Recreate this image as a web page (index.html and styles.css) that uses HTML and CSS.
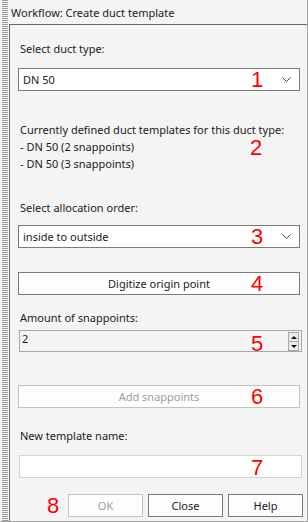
FILE: index.html
```html
<!DOCTYPE html>
<html lang="en">
<head>
  <meta charset="UTF-8">
  <meta name="viewport" content="width=device-width, initial-scale=1.0">
  <title>Workflow: Create duct template</title>
  <link rel="stylesheet" href="styles.css">
</head>
<body>
  <div class="frame">
    <div class="grip"></div>
    <div class="panel">
      <div class="title">Workflow: Create duct template</div>
      <div class="group">
        <div class="lbl first">Select duct type:</div>
        <div class="row">
          <div class="combo">
            <span>DN 50</span>
            <svg class="chev" width="9" height="5" viewBox="0 0 9 5"><polyline points="0.5,0.5 4.5,4.5 8.5,0.5" fill="none" stroke="#444" stroke-width="1"/></svg>
          </div>
          <span class="num n1">1</span>
        </div>

        <div class="row info">
          <div>Currently defined duct templates for this duct type:</div>
          <div>- DN 50 (2 snappoints)</div>
          <div>- DN 50 (3 snappoints)</div>
          <span class="num n2">2</span>
        </div>

        <div class="lbl alloc">Select allocation order:</div>
        <div class="row">
          <div class="combo">
            <span>inside to outside</span>
            <svg class="chev" width="9" height="5" viewBox="0 0 9 5"><polyline points="0.5,0.5 4.5,4.5 8.5,0.5" fill="none" stroke="#444" stroke-width="1"/></svg>
          </div>
          <span class="num n3">3</span>
        </div>

        <div class="row digit">
          <button class="btn">Digitize origin point</button>
          <span class="num n4">4</span>
        </div>

        <div class="lbl amount">Amount of snappoints:</div>
        <div class="row">
          <div class="spin">
            <span class="spin-val">2</span>
            <div class="spin-btns">
              <div class="arrow up"></div>
              <div class="arrow down"></div>
            </div>
          </div>
          <span class="num n5">5</span>
        </div>

        <div class="row add">
          <button class="btn off">Add snappoints</button>
          <span class="num n6">6</span>
        </div>

        <div class="lbl tname">New template name:</div>
        <div class="row">
          <div class="textbox"></div>
          <span class="num n7">7</span>
        </div>

        <div class="footer">
          <span class="num n8">8</span>
          <button class="btn small off">OK</button>
          <button class="btn small">Close</button>
          <button class="btn small">Help</button>
        </div>
      </div>
    </div>
  </div>
</body>
</html>
```

FILE: styles.css
```css
body {
  margin: 0;
  padding: 0;
  background-color: #f4f4f4;
  font-family: "Noto Sans", Arial, sans-serif;
  font-size: 11px;
  color: #1b1b1b;
}

.frame {
  display: flex;
  width: 307px;
  height: 521px;
  border-right: 1px solid #a5a5a5;
  border-bottom: 1px solid #a5a5a5;
  overflow: hidden;
}

.grip {
  width: 6px;
  margin-left: 2px;
  margin-right: 1px;
  background: repeating-linear-gradient(to bottom, #9a9a9a 0, #9a9a9a 1px, #f4f4f4 1px, #f4f4f4 2px);
}

.panel {
  flex: 1;
  display: flex;
  flex-direction: column;
}

.title {
  height: 24px;
  line-height: 25px;
  padding-left: 2px;
  color: #222;
  white-space: nowrap;
}

.group {
  flex: 1;
  border-top: 1px solid #6a6a6a;
  border-left: 1px solid #6a6a6a;
  padding: 0 7px 0 8px;
}

.lbl {
  line-height: 16px;
  padding-left: 2px;
  white-space: nowrap;
}

.lbl.first { margin-top: 16px; margin-bottom: 11px; }
.lbl.alloc { margin-top: 28px; margin-bottom: 9px; }
.lbl.amount { margin-top: 15px; margin-bottom: 4px; }
.lbl.tname { margin-top: 20px; margin-bottom: 11px; }

.row {
  position: relative;
}

.combo {
  height: 21px;
  border: 1px solid #7a7a7a;
  background: #fff;
  display: flex;
  align-items: center;
  justify-content: space-between;
  padding: 0 8px 0 4px;
}

.info {
  margin-top: 30px;
  line-height: 17px;
  padding-left: 2px;
  white-space: nowrap;
}

.btn {
  display: block;
  width: 100%;
  height: 23px;
  border: 1px solid #7a7a7a;
  background: #fdfdfd;
  font-family: inherit;
  font-size: 11px;
  color: #1b1b1b;
  padding: 0;
}

.btn.off {
  border-color: #c2c2c2;
  color: #9d9d9d;
}

.digit { margin-top: 24px; }
.add { margin-top: 33px; }

.spin {
  height: 20px;
  margin-left: 1px;
  margin-right: -2px;
  border: 1px solid #a8a8a8;
  display: flex;
  justify-content: space-between;
  padding: 0 2px 0 2px;
}

.spin-val {
  line-height: 16px;
}

.spin-btns {
  width: 11px;
  margin-top: 1px;
  display: flex;
  flex-direction: column;
}

.arrow {
  height: 8px;
  border: 1px solid #a8a8a8;
  background: #ececec;
  display: flex;
  align-items: center;
  justify-content: center;
}

.arrow.down { border-top: none; }

.arrow::after {
  content: "";
  border-left: 3px solid transparent;
  border-right: 3px solid transparent;
}

.arrow.up::after { border-bottom: 3px solid #111; }
.arrow.down::after { border-top: 3px solid #111; }

.textbox {
  height: 21px;
  margin-left: 1px;
  margin-right: -2px;
  border: 1px solid #d4d4d4;
  background: #fff;
}

.footer {
  position: relative;
  display: flex;
  justify-content: flex-end;
  gap: 5px;
  margin-top: 16px;
  margin-right: -3px;
}

.btn.small {
  width: 75px;
}

.num {
  position: absolute;
  font-family: "Liberation Sans", Arial, sans-serif;
  font-size: 22px;
  line-height: 22px;
  color: #ff0000;
  width: 20px;
  text-align: center;
}

.n1 { left: 229px; top: 1px; }
.n2 { left: 228px; top: 16px; }
.n3 { left: 229px; top: 1px; }
.n4 { left: 229px; top: 1px; }
.n5 { left: 229px; top: 3px; }
.n6 { left: 229px; top: 1px; }
.n7 { left: 229px; top: 2px; }
.n8 { left: 25px; top: 1px; }
```
